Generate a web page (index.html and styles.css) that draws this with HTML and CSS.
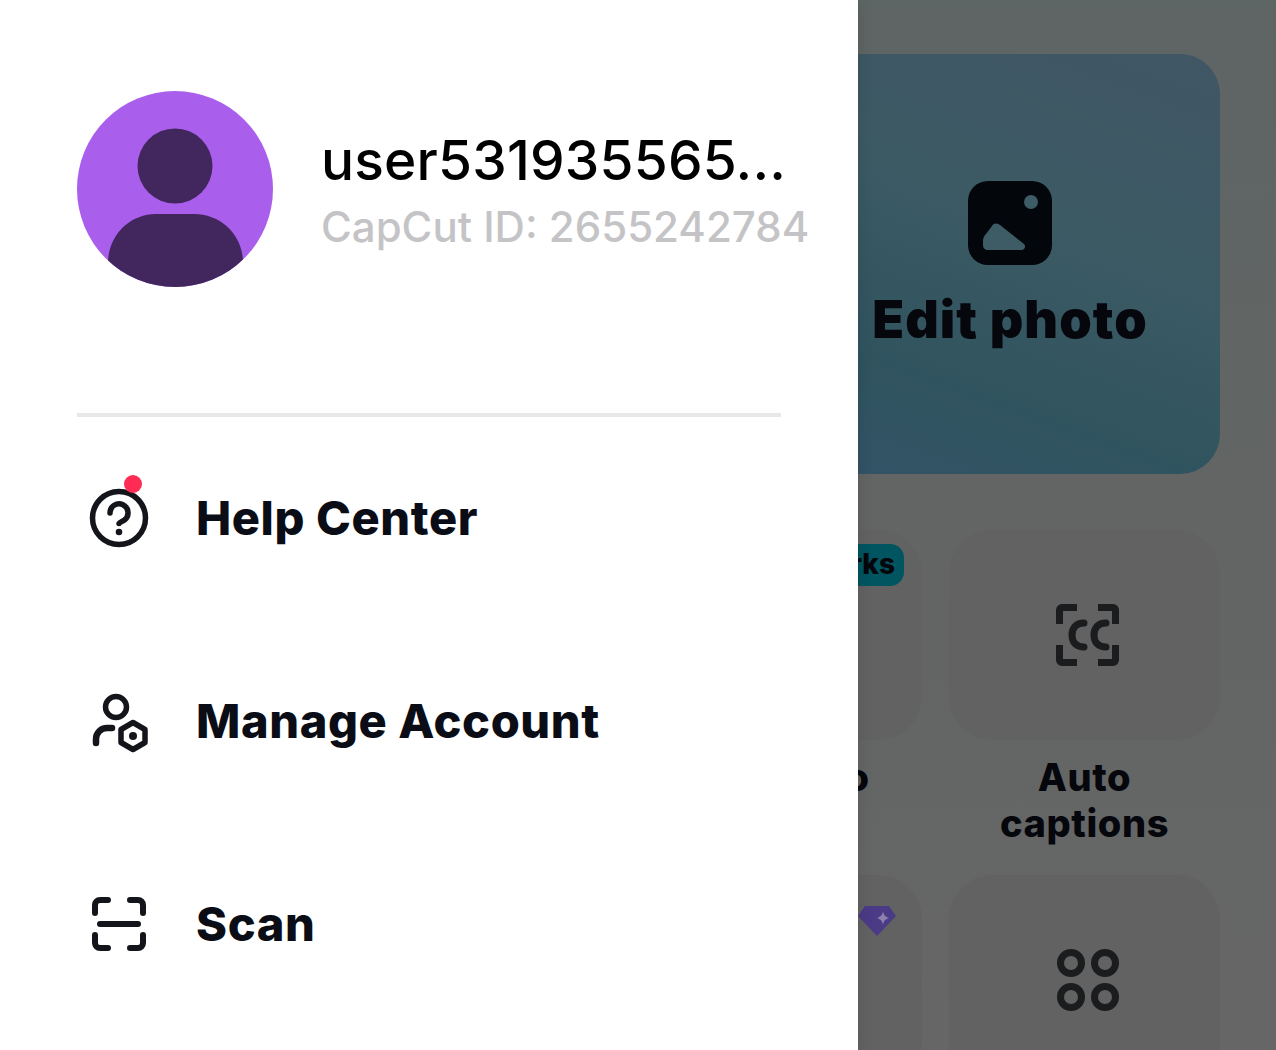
FILE: index.html
```html
<!DOCTYPE html>
<html lang="en">
<head>
  <meta charset="UTF-8" />
  <meta name="viewport" content="width=device-width, initial-scale=1.0"/>
  <title>CapCut</title>
  <link rel="stylesheet" href="styles.css">
</head>
<body>

  <!-- Home screen, dimmed behind the drawer -->
  <div class="home">
    <div class="edit-card">
      <svg class="photo-icon" viewBox="0 0 84 84">
        <rect width="84" height="84" rx="20" fill="#03060b"/>
        <circle cx="63" cy="21" r="7" fill="#3d5c66"/>
        <path d="M15 60c0-3 1-5 3-7l6-8c2-3 5-3 8-1l24 19c2 2 1 6-2 6H20c-3 0-5-2-5-5z" fill="#3d5c66"/>
      </svg>
      <div class="edit-label">Edit photo</div>
    </div>

    <div class="tools">
      <div class="tool">
        <div class="tile">
          <span class="badge">Works</span>
        </div>
        <div class="tool-label">Image to<br>video</div>
      </div>
      <div class="tool">
        <div class="tile">
          <svg class="tile-icon" viewBox="0 0 64 62" fill="none" stroke="#1b1c1e" stroke-width="7">
            <path d="M21 3.500H6a2.500 2.500 0 0 0-2.500 2.500v14"/>
            <path d="M42 3.500h15a2.500 2.500 0 0 1 2.500 2.500v14"/>
            <path d="M3.500 41v15a2.500 2.500 0 0 0 2.500 2.500h15"/>
            <path d="M59.500 41v15a2.500 2.500 0 0 1-2.500 2.500H42"/>
            <path d="M28 19c-8 0-12 5-12 12s4 12 12 12" stroke-linecap="round"/>
            <path d="M50 19c-8 0-12 5-12 12s4 12 12 12" stroke-linecap="round"/>
          </svg>
        </div>
        <div class="tool-label">Auto<br>captions</div>
      </div>
      <div class="tool">
        <div class="tile">
          <svg class="gem" viewBox="0 0 38 30">
            <path d="M7 0h24l7 10-19 20L0 10z" fill="#4b3a86"/>
            <path d="M25 5c.6 4 2 5.500 6 7-4 1.500-5.400 3-6 7-.6-4-2-5.500-6-7 4-1.500 5.400-3 6-7z" fill="#8d80ad"/>
          </svg>
        </div>
      </div>
      <div class="tool">
        <div class="tile">
          <svg class="tile-icon" viewBox="0 0 64 62" fill="none" stroke="#1b1c1e" stroke-width="7">
            <circle cx="15" cy="14" r="10.500"/>
            <circle cx="49" cy="14" r="10.500"/>
            <circle cx="15" cy="48" r="10.500"/>
            <circle cx="49" cy="48" r="10.500"/>
          </svg>
        </div>
      </div>
    </div>
  </div>

  <!-- Drawer -->
  <div class="drawer">
    <div class="profile">
      <svg class="avatar" viewBox="0 0 196 196">
        <circle cx="98" cy="75" r="37.500" fill="#42275e"/>
        <path d="M31 172c0-28 22-49 48-49h38c27 0 49 21 49 49v24H31z" fill="#42275e"/>
      </svg>
      <div class="profile-text">
        <div class="username">user531935565...</div>
        <div class="user-id">CapCut ID: 2655242784</div>
      </div>
    </div>

    <div class="divider"></div>

    <div class="menu-row">
      <svg class="menu-icon" viewBox="0 0 84 84" fill="none" stroke="#14151a">
        <circle cx="42" cy="42" r="26.500" stroke-width="5.500"/>
        <path d="M33 37a9 9 0 1 1 14.500 7c-3 2-5.500 2.500-5.500 3.500" stroke-width="5.500" stroke-linecap="round"/>
        <circle cx="42" cy="56" r="3.300" fill="#14151a" stroke="none"/>
        <circle cx="56" cy="8" r="9" fill="#fe2c55" stroke="none"/>
      </svg>
      <span>Help Center</span>
    </div>

    <div class="menu-row">
      <svg class="menu-icon" viewBox="0 0 84 84" fill="none" stroke="#14151a">
        <circle cx="39" cy="28" r="10.500" stroke-width="5.500"/>
        <path d="M19 64v-4a11 11 0 0 1 11-11h5" stroke-width="6.500" stroke-linecap="round"/>
        <polygon points="56,43.500 68,50.500 68,63.500 56,70.500 44,63.500 44,50.500" stroke-width="5.500" stroke-linejoin="round"/>
        <circle cx="56" cy="57" r="4" fill="#14151a" stroke="none"/>
      </svg>
      <span>Manage Account</span>
    </div>

    <div class="menu-row">
      <svg class="menu-icon" viewBox="0 0 84 84" fill="none" stroke="#14151a" stroke-width="6" stroke-linecap="round">
        <path d="M31 18h-8a5 5 0 0 0-5 5v8"/>
        <path d="M53 18h8a5 5 0 0 1 5 5v8"/>
        <path d="M23 42h38"/>
        <path d="M18 53v8a5 5 0 0 0 5 5h8"/>
        <path d="M66 53v8a5 5 0 0 1-5 5h-8"/>
      </svg>
      <span>Scan</span>
    </div>
  </div>

</body>
</html>
```

FILE: styles.css
```css
* { box-sizing: border-box; margin: 0; padding: 0; }
html, body { width: 1276px; height: 1050px; overflow: hidden; }
body {
  position: relative;
  font-family: Inter, 'Liberation Sans', sans-serif;
  color: #05070c;
}

/* dimmed home screen */
.home {
  height: 1050px;
  overflow: hidden;
  padding: 54px 56px 0 0;
  display: flex;
  flex-direction: column;
  align-items: flex-end;
  background: linear-gradient(180deg, #5e6565 0%, #626564 45%, #666666 100%);
}
.edit-card {
  width: 420px;
  height: 420px;
  flex-shrink: 0;
  border-radius: 40px;
  padding-top: 127px;
  margin-bottom: 56px;
  display: flex;
  flex-direction: column;
  align-items: center;
  background: linear-gradient(200deg, #405664 0%, #3c5a64 40%, #30545f 75%, #325367 100%);
}
.photo-icon { width: 84px; height: 84px; }
.edit-label {
  font-size: 52px;
  font-weight: 900;
  letter-spacing: 1.1px;
  line-height: 64px;
  margin-top: 23px;
  white-space: nowrap;
}

.tools {
  display: grid;
  grid-template-columns: 271px 271px;
  column-gap: 27px;
  row-gap: 29px;
}
.tile {
  position: relative;
  height: 210px;
  border-radius: 44px;
  background: #626262;
  display: flex;
  align-items: center;
  justify-content: center;
  padding-left: 6px;
}
.tile-icon { width: 64px; height: 62px; }
.tool-label {
  height: 92px;
  margin-top: 14px;
  font-size: 38px;
  font-weight: 800;
  letter-spacing: 0.6px;
  line-height: 46px;
  text-align: center;
}
.badge {
  position: absolute;
  top: 14px;
  right: 18px;
  height: 42px;
  padding: 0 9px 0 12px;
  border-radius: 14px;
  background: #005560;
  font-size: 28px;
  font-weight: 800;
  line-height: 40px;
}
.gem {
  position: absolute;
  top: 31px;
  right: 26px;
  width: 38px;
  height: 30px;
}

/* drawer */
.drawer {
  position: absolute;
  top: 0;
  left: 0;
  width: 858px;
  height: 1050px;
  padding: 91px 77px 0;
  overflow: hidden;
  background: #fff;
  box-shadow: 0 0 16px rgba(0,0,0,0.12);
}
.profile { display: flex; align-items: flex-start; gap: 48px; }
.avatar {
  width: 196px;
  height: 196px;
  flex-shrink: 0;
  border-radius: 50%;
  background: #a95eec;
}
.profile-text { padding-top: 34px; white-space: nowrap; }
.username { font-size: 55px; font-weight: 500; letter-spacing: 0.2px; line-height: 70px; color: #000; }
.user-id { font-size: 42px; font-weight: 500; line-height: 64px; color: #c4c4c6; }
.divider { height: 4px; width: 704px; margin-top: 126px; background: #e8e8e8; }

.menu-row {
  height: 202px;
  margin-bottom: 1px;
  display: flex;
  align-items: center;
  gap: 35px;
  font-size: 47px;
  font-weight: 800;
  letter-spacing: 0.6px;
  color: #0b0d16;
  white-space: nowrap;
}
.menu-row span { margin-bottom: 2px; }
.menu-icon { width: 84px; height: 84px; flex-shrink: 0; overflow: visible; }
```
